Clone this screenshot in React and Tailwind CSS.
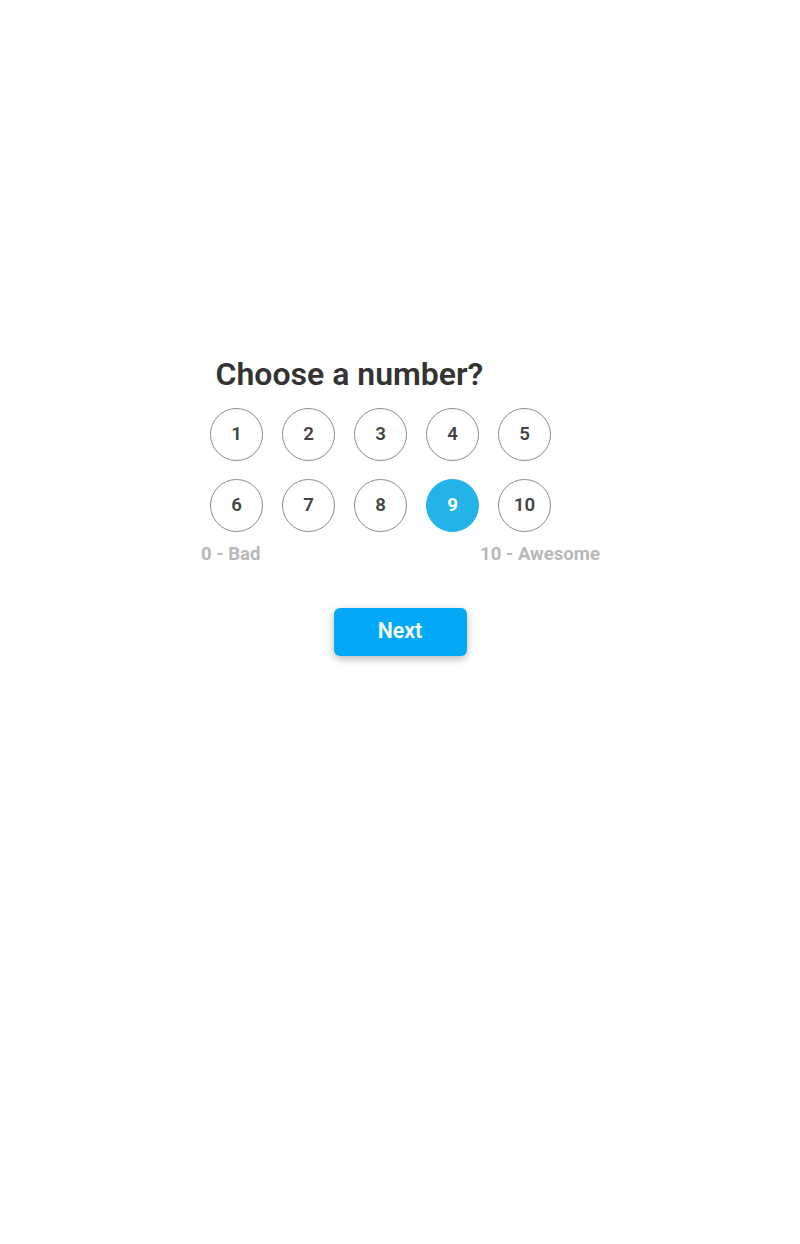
import { useState } from "react";

const numbers = [1, 2, 3, 4, 5, 6, 7, 8, 9, 10];

export default function App() {
  const [selected, setSelected] = useState(9);
  return (
    <main className="flex min-h-screen justify-center bg-white pt-[351px] font-['Roboto',sans-serif] antialiased">
      <section className="w-[400px]">
        <h1 className="pl-[15.5px] text-[32px] leading-[46px] font-semibold text-[#333333]">Choose a number?</h1>
        <div className="mt-[11px] ml-[10px] grid w-[341px] grid-cols-5 gap-x-[19px] gap-y-[18px]">
          {numbers.map((n) => (
            <button
              key={n}
              type="button"
              onClick={() => setSelected(n)}
              className={
                n === selected
                  ? "size-[53px] rounded-full border border-[#22b3e9] bg-[#22b3e9] text-[18.67px] leading-[21px] font-bold text-white"
                  : "size-[53px] rounded-full border border-[#8c8c8c] bg-white text-[18.67px] leading-[21px] font-semibold text-[#444444]"
              }
            >
              {n}
            </button>
          ))}
        </div>
        <div className="mt-[11px] flex justify-between pl-px text-[18.6px] leading-[22px] font-bold text-[#b9b9b9]">
          <span>0 - Bad</span>
          <span>10 - Awesome</span>
        </div>
        <div className="mt-[43px] flex justify-center">
          <button
            type="button"
            className="h-12 w-[133px] rounded-md bg-[#03a9f7] pb-[3px] text-[21.3px] leading-6 font-semibold text-white shadow-[0_3px_9px_rgba(0,0,0,0.28)]"
          >
            Next
          </button>
        </div>
      </section>
    </main>
  );
}
